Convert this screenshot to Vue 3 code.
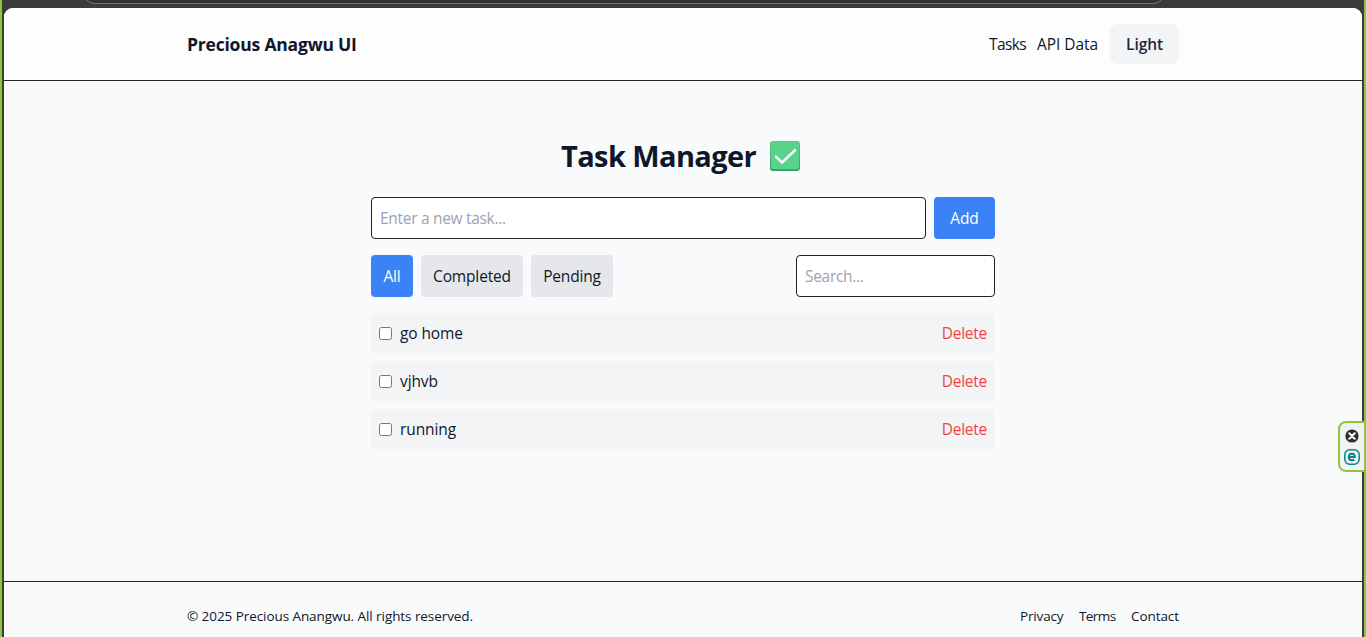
<script setup>
import { ref, computed } from 'vue'

const filters = ['All', 'Completed', 'Pending']
const active = ref('All')
const draft = ref('')
const search = ref('')
const tasks = ref([
  { id: 1, text: 'go home', done: false },
  { id: 2, text: 'vjhvb', done: false },
  { id: 3, text: 'running', done: false },
])

const visible = computed(() =>
  tasks.value.filter((t) => {
    if (active.value === 'Completed' && !t.done) return false
    if (active.value === 'Pending' && t.done) return false
    return t.text.includes(search.value)
  })
)

function add() {
  if (!draft.value.trim()) return
  tasks.value.push({ id: Date.now(), text: draft.value, done: false })
  draft.value = ''
}
function remove(id) {
  tasks.value = tasks.value.filter((t) => t.id !== id)
}
</script>

<template>
  <div class="frame">
    <div class="chrome"><div class="omnibox"></div></div>
    <div class="page">
      <header class="header">
        <div class="container">
          <span class="brand">Precious Anagwu UI</span>
          <nav class="nav">
            <a class="tasks-link">Tasks</a>
            <a class="api-link">API Data</a>
            <button class="theme">Light</button>
          </nav>
        </div>
      </header>

      <main class="main">
        <h1 class="title">
          <span class="title-text">Task Manager</span>
          <svg class="check" viewBox="0 0 30 30">
            <defs>
              <linearGradient id="edge" x1="0" y1="0" x2="0" y2="1">
                <stop offset="0" stop-color="#5cc98b" />
                <stop offset="1" stop-color="#36996a" />
              </linearGradient>
            </defs>
            <rect width="30" height="30" rx="3" fill="url(#edge)" />
            <rect x="1" y="1.2" width="28" height="27" rx="2.5" fill="#59d28c" />
            <path d="M6 15.8l6 5.7L25 9.3" fill="none" stroke="#f7f3fa" stroke-width="2.7" stroke-linecap="round" stroke-linejoin="miter" />
          </svg>
        </h1>
        <form class="add-row" @submit.prevent="add">
          <input v-model="draft" class="field grow" placeholder="Enter a new task..." />
          <button class="add">Add</button>
        </form>
        <div class="tools">
          <div class="filters">
            <button
              v-for="f in filters"
              :key="f"
              class="filter"
              :class="[f.toLowerCase(), { active: f === active }]"
              @click="active = f"
            >{{ f }}</button>
          </div>
          <input v-model="search" class="field search" placeholder="Search..." />
        </div>
        <ul class="list">
          <li v-for="t in visible" :key="t.id" class="task">
            <label class="label">
              <input v-model="t.done" type="checkbox" class="box" />
              <span>{{ t.text }}</span>
            </label>
            <button class="delete" @click="remove(t.id)">Delete</button>
          </li>
        </ul>
      </main>

      <footer class="footer">
        <div class="container">
          <span class="copy">© 2025 Precious Anangwu. All rights reserved.</span>
          <div class="links">
            <a class="privacy">Privacy</a>
            <a class="terms">Terms</a>
            <a class="contact">Contact</a>
          </div>
        </div>
      </footer>
    </div>

    <aside class="widget">
      <svg width="14" height="14" viewBox="0 0 14 14">
        <circle cx="7" cy="7" r="6.6" fill="#2b2b30" />
        <path d="M4.3 4.3l5.4 5.4M9.7 4.3L4.3 9.7" stroke="#fff" stroke-width="2.2" stroke-linecap="round" />
      </svg>
      <svg width="16" height="16" viewBox="0 0 16 16" fill="none" stroke="#07858f">
        <rect x=".8" y=".8" width="14.4" height="14.4" rx="5" stroke-width="1.5" />
        <path d="M4.9 8h5.9c0-2-1.1-3.3-2.9-3.3S4.8 6 4.8 8s1.2 3.3 3.2 3.3c1 0 1.8-.2 2.5-.6" stroke-width="2" />
      </svg>
    </aside>
  </div>
</template>

<style>
html,
body {
  margin: 0;
  overflow: hidden;
}
</style>

<style scoped>
* {
  box-sizing: border-box;
}
.frame {
  position: relative;
  display: flex;
  flex-direction: column;
  height: 637px;
  padding: 0 2px;
  border: solid #8dc63f;
  border-width: 0 2px;
  background: #3b3b3b;
  color: #0f172a;
  font: 15.5px/24px "Open Sans", "Noto Sans", sans-serif;
  letter-spacing: -0.16px;
}
.chrome {
  flex: 0 0 8px;
  overflow: hidden;
}
.omnibox {
  width: 1082px;
  height: 24px;
  margin: -20px 0 0 79px;
  border: 1px solid #777;
  border-radius: 12px;
  background: #303030;
}
.page {
  flex: 1;
  display: flex;
  flex-direction: column;
  border-radius: 9px 9px 0 0;
  background: #f9fafc;
  overflow: hidden;
}
.header {
  height: 73px;
  padding-top: 16px;
  border-bottom: 1px solid #222428;
  background: #fdfdfd;
}
.container {
  display: flex;
  align-items: center;
  justify-content: space-between;
  width: 992px;
  margin: 0 auto;
  white-space: nowrap;
}
.brand {
  font-size: 17.5px;
  font-weight: 700;
  letter-spacing: -0.2px;
}
.nav {
  display: flex;
  align-items: center;
  gap: 12px;
}
.tasks-link {
  width: 36px;
  letter-spacing: -0.6px;
}
.api-link {
  width: 61px;
  letter-spacing: -0.05px;
}
button {
  padding: 0;
  border: 0;
  background: none;
  color: inherit;
  font: inherit;
  letter-spacing: inherit;
  white-space: nowrap;
}
.theme {
  width: 69px;
  height: 40px;
  border-radius: 8px;
  background: #f3f4f6;
  color: #1e293b;
  font-weight: 600;
  letter-spacing: -0.1px;
}
.main {
  flex: 1;
  width: 624px;
  margin: 0 auto;
  padding-top: 55px;
}
.title {
  display: flex;
  align-items: center;
  gap: 13px;
  height: 40px;
  margin: 0 0 21px;
  padding-left: 190px;
  font-size: 29px;
  line-height: 40px;
  font-weight: 700;
  letter-spacing: -0.6px;
  white-space: nowrap;
}
.title-text {
  width: 196px;
}
.check {
  width: 30px;
  height: 30px;
}
.add-row {
  display: flex;
  gap: 8px;
  margin-bottom: 16px;
}
.field {
  height: 42px;
  padding: 8px;
  border: 1px solid #202226;
  border-radius: 4px;
  background: #fff;
  color: inherit;
  font: inherit;
  letter-spacing: -0.3px;
  outline: 0;
}
.field::placeholder {
  color: #9ca3af;
  opacity: 1;
}
.grow {
  flex: 1;
  min-width: 0;
}
.search {
  width: 199px;
}
.add {
  width: 61px;
  border-radius: 4px;
  background: #3b82f6;
  color: #fff;
}
.tools {
  display: flex;
  justify-content: space-between;
  margin-bottom: 16px;
}
.filters {
  display: flex;
  gap: 8px;
}
.filter {
  height: 42px;
  border-radius: 4px;
  background: #e5e7eb;
}
.filter.active {
  background: #3b82f6;
  color: #fff;
}
.all {
  width: 42px;
}
.completed {
  width: 102px;
}
.pending {
  width: 82px;
}
.list {
  display: flex;
  flex-direction: column;
  gap: 8px;
  margin: 0;
  padding: 0;
  list-style: none;
}
.task {
  display: flex;
  align-items: center;
  justify-content: space-between;
  height: 40px;
  padding: 8px;
  border-radius: 4px;
  background: #f3f4f6;
}
.label {
  display: flex;
  align-items: center;
  gap: 8px;
  letter-spacing: -0.1px;
}
.box {
  width: 13px;
  height: 13px;
  margin: 0;
}
.delete {
  color: #ef4444;
  letter-spacing: -0.25px;
}
.footer {
  height: 56px;
  padding-top: 24px;
  border-top: 1px solid #222428;
  font-size: 13.5px;
  line-height: 20px;
}
.copy {
  letter-spacing: -0.07px;
}
.links {
  display: flex;
  gap: 16px;
}
.privacy {
  width: 43px;
}
.terms {
  width: 36px;
  letter-spacing: -0.6px;
}
.contact {
  width: 48px;
  letter-spacing: -0.08px;
}
.widget {
  position: absolute;
  top: 421px;
  right: -2px;
  display: flex;
  flex-direction: column;
  align-items: center;
  gap: 6px;
  width: 28px;
  height: 51px;
  padding-top: 6px;
  border: 2px solid #8dc63f;
  border-radius: 8px 0 0 8px;
  background: #f2f2f2;
}
</style>
